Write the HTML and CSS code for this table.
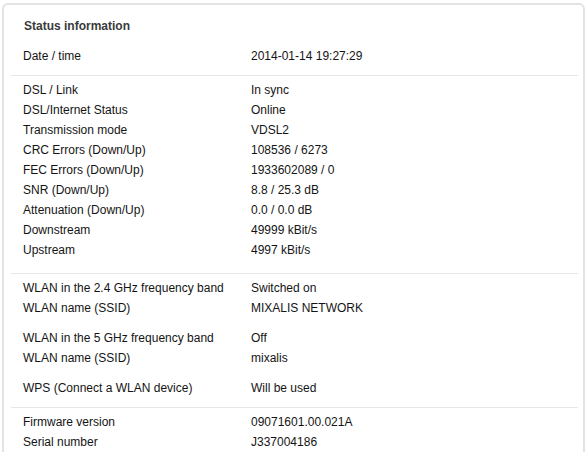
FILE: index.html
```html
<!DOCTYPE html>
<html>
<head>
<meta charset="utf-8">
<link rel="stylesheet" href="styles.css">
</head>
<body>
<div class="panel">
  <div class="title">Status information</div>
  <div class="section first">
    <div class="grid">
      <div>Date / time</div><div>2014-01-14 19:27:29</div>
    </div>
  </div>
  <div class="section dsl">
    <div class="grid">
      <div>DSL / Link</div><div>In sync</div>
      <div>DSL/Internet Status</div><div>Online</div>
      <div>Transmission mode</div><div>VDSL2</div>
      <div>CRC Errors (Down/Up)</div><div>108536 / 6273</div>
      <div>FEC Errors (Down/Up)</div><div>1933602089 / 0</div>
      <div>SNR (Down/Up)</div><div>8.8 / 25.3 dB</div>
      <div>Attenuation (Down/Up)</div><div>0.0 / 0.0 dB</div>
      <div>Downstream</div><div>49999 kBit/s</div>
      <div>Upstream</div><div>4997 kBit/s</div>
    </div>
  </div>
  <div class="section wlan">
    <div class="grid group">
      <div>WLAN in the 2.4 GHz frequency band</div><div>Switched on</div>
      <div>WLAN name (SSID)</div><div>MIXALIS NETWORK</div>
    </div>
    <div class="grid group">
      <div>WLAN in the 5 GHz frequency band</div><div>Off</div>
      <div>WLAN name (SSID)</div><div>mixalis</div>
    </div>
    <div class="grid">
      <div>WPS (Connect a WLAN device)</div><div>Will be used</div>
    </div>
  </div>
  <div class="section last">
    <div class="grid">
      <div>Firmware version</div><div>09071601.00.021A</div>
      <div>Serial number</div><div>J337004186</div>
    </div>
  </div>
</div>
</body>
</html>
```

FILE: styles.css
```css
html, body {
  margin: 0;
  padding: 0;
  background: #ffffff;
}
body {
  font-family: "Liberation Sans", Arial, sans-serif;
  font-size: 12px;
  color: #141414;
  overflow: hidden;
}
.panel {
  margin: 3px 1px 0 2px;
  height: 460px;
  border: 2px solid #e3e3e3;
  border-radius: 6px;
  padding: 11px 5px 0 7px;
  box-sizing: border-box;
  box-shadow: 0 0 1px #f0f0f0;
}
.title {
  font-weight: bold;
  color: #3a3a3a;
  line-height: 20px;
  padding-left: 13px;
  margin-bottom: 10px;
}
.section {
  padding-left: 12px;
}
.section.first {
  padding-bottom: 9px;
}
.section + .section {
  border-top: 1px solid #e6e6e6;
  padding-top: 4px;
}
.section.dsl {
  padding-bottom: 13px;
}
.section.wlan {
  padding-bottom: 9px;
}
.grid {
  display: grid;
  grid-template-columns: 228px 1fr;
  line-height: 20px;
  white-space: nowrap;
}
.grid.group {
  margin-bottom: 10px;
}
```
